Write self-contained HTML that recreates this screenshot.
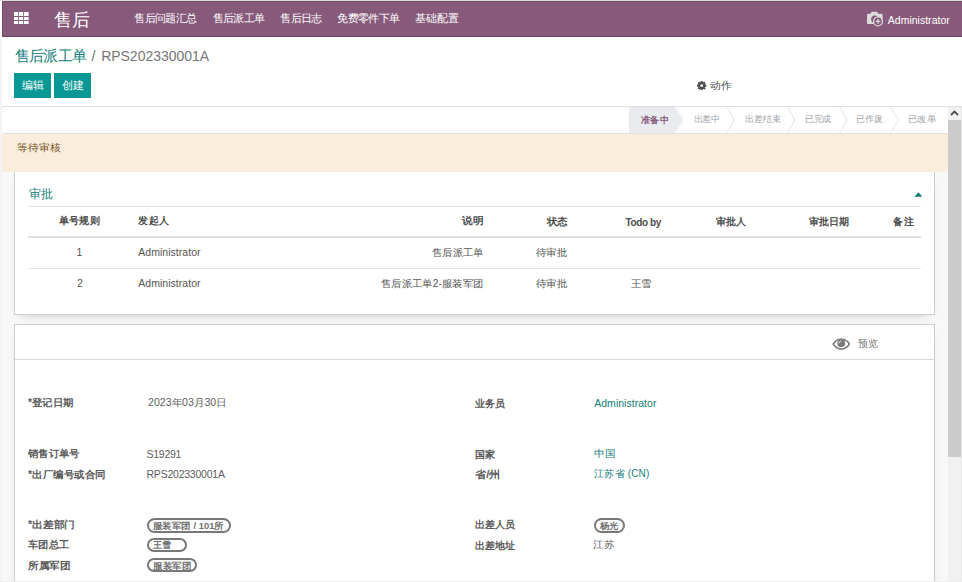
<!DOCTYPE html>
<html><head><meta charset="utf-8"><style>
html,body{margin:0;padding:0;}
body{width:962px;height:582px;overflow:hidden;position:relative;background:#fff;font-family:'Liberation Sans',sans-serif;}
.a{position:absolute;}
.t{position:absolute;line-height:1;white-space:pre;font-family:'Liberation Sans',sans-serif;}
</style></head><body>
<div class=a style="left:0;top:0;width:962px;height:1px;background:#dcdcdc"></div>
<div class=a style="left:2px;top:1px;width:960px;height:36px;background:#875A7B"></div>
<div class=a style="left:2px;top:1px;width:960px;height:1px;background:#7d5071"></div>
<div class=a style="left:2px;top:36px;width:960px;height:1px;background:#6f4464"></div>
<div class=a style="left:2px;top:1px;width:1px;height:36px;background:#74486a"></div>
<div class=a style="left:0;top:37px;width:2px;height:545px;background:#f4f4f4"></div>
<!-- grid icon -->
<svg class=a style="left:10px;top:8px" width="24" height="20" viewBox="0 0 24 20"><g fill="#fff"><rect x="4" y="4" width="4.2" height="4"/><rect x="4" y="9" width="4.2" height="3"/><rect x="4" y="13" width="4.2" height="3"/><rect x="9" y="4" width="4.2" height="4"/><rect x="9" y="9" width="4.2" height="3"/><rect x="9" y="13" width="4.2" height="3"/><rect x="14" y="4" width="4.6" height="4"/><rect x="14" y="9" width="4.6" height="3"/><rect x="14" y="13" width="4.6" height="3"/></g></svg>
<!-- camera avatar icon -->
<svg class=a style="left:862px;top:8px" width="26" height="22" viewBox="0 0 26 22">
<path d="M5.2 5.8 h3.4 l1 -2 h5.6 l1 2 h3.2 a1.2 1.2 0 0 1 1.2 1.2 v7.7 a1.2 1.2 0 0 1 -1.2 1.2 h-13.2 a1.2 1.2 0 0 1 -1.2 -1.2 v-7.7 a1.2 1.2 0 0 1 1.2 -1.2z" fill="#dcdcdc"/>
<circle cx="12.8" cy="11.2" r="3.6" fill="#875A7B"/>
<circle cx="16" cy="13.4" r="5" fill="#dcdcdc"/>
<circle cx="16" cy="13.4" r="3.8" fill="#875A7B"/>
<path d="M16 11 v4.8 M13.6 13.4 h4.8" stroke="#dcdcdc" stroke-width="1.3"/>
</svg>
<!-- control panel -->
<div class=a style="left:14px;top:73px;width:37px;height:25px;background:#0a9894"></div>
<div class=a style="left:54px;top:73px;width:37px;height:25px;background:#0a9894"></div>
<svg class=a style="left:697.3px;top:80.8px" width="9.4" height="9.4" viewBox="0 0 10 10">
<g fill="#505050"><circle cx="5" cy="5" r="3.7"/>
<rect x="3.8" y="0" width="2.4" height="10" rx="0.4"/><rect x="0" y="3.8" width="10" height="2.4" rx="0.4"/>
<rect x="3.8" y="0" width="2.4" height="10" rx="0.4" transform="rotate(45 5 5)"/><rect x="3.8" y="0" width="2.4" height="10" rx="0.4" transform="rotate(-45 5 5)"/></g>
<circle cx="5" cy="5" r="1.5" fill="#fff"/></svg>
<div class=a style="left:2px;top:106px;width:960px;height:1px;background:#dfe1e4"></div>
<!-- statusbar -->
<div class=a style="left:2px;top:133px;width:946px;height:1px;background:#dfe1e4"></div>
<svg class=a style="left:620px;top:107px" width="328" height="26" viewBox="0 0 328 26">
<path d="M9 0 H55 L63.5 13 L55 26 H9 Z" fill="#e9ebee"/>
<g fill="none" stroke="#dfe1e4" stroke-width="1">
<path d="M106.5 0 L114.5 13 L106.5 26"/><path d="M167.5 0 L175 13 L167.5 26"/><path d="M219.5 0 L227 13 L219.5 26"/><path d="M270.5 0 L278.5 13 L270.5 26"/>
</g></svg>
<!-- form bg -->
<div class=a style="left:2px;top:134px;width:946px;height:447px;background:#f8f8f8"></div>
<div class=a style="left:2px;top:134px;width:946px;height:38px;background:#fbeddc"></div>
<!-- card 1 -->
<div class=a style="left:14px;top:172px;width:919px;height:142px;background:#fff;border:1px solid #c9d0d8;border-top:none;box-shadow:0 5px 12px -8px rgba(0,0,0,.35)"></div>
<svg class=a style="left:913.5px;top:191.8px" width="9" height="5" viewBox="0 0 9 5"><path d="M0.4 4.7 L4.4 0.2 L8.4 4.7Z" fill="#137d7c"/></svg>
<div class=a style="left:28px;top:206px;width:893px;height:1px;background:#e3e6ea"></div>
<div class=a style="left:28px;top:236px;width:893px;height:2px;background:#dcdfe3"></div>
<div class=a style="left:28px;top:268px;width:893px;height:1px;background:#e3e6ea"></div>
<!-- card 2 -->
<div class=a style="left:14px;top:324px;width:919px;height:270px;background:#fff;border:1px solid #c9d0d8;box-shadow:0 5px 12px -8px rgba(0,0,0,.35)"></div>
<div class=a style="left:15px;top:359px;width:919px;height:1px;background:#d5dae0"></div>
<svg class=a style="left:832px;top:338px" width="19" height="12" viewBox="0 0 19 12">
<path d="M0.3 6 C3 1.6 6 0.4 9.3 0.4 C12.6 0.4 15.8 1.6 18.3 6 C15.8 10.4 12.6 11.8 9.3 11.8 C6 11.8 3 10.4 0.3 6Z" fill="#7a7a7a"/>
<path d="M2.1 6 C4.3 2.9 6.8 2 9.3 2 C11.8 2 14.3 2.9 16.5 6 C14.3 9.1 11.8 10.2 9.3 10.2 C6.8 10.2 4.3 9.1 2.1 6Z" fill="#fff"/>
<circle cx="9.2" cy="5.2" r="3.9" fill="#7a7a7a"/>
<path d="M6.9 5.4 A2.4 2.4 0 0 1 9.3 3" fill="none" stroke="#f4f4f4" stroke-width="0.9"/>
</svg>
<!-- badges -->
<div class=a style="left:147px;top:518px;width:80.3px;height:10.5px;border:2px solid #787878;border-radius:8px"></div>
<div class=a style="left:147px;top:538.2px;width:35.5px;height:10px;border:2px solid #787878;border-radius:8px"></div>
<div class=a style="left:147px;top:558.4px;width:45.5px;height:9.6px;border:2px solid #787878;border-radius:8px"></div>
<div class=a style="left:593.9px;top:518.3px;width:27px;height:10.3px;border:2px solid #787878;border-radius:8px"></div>
<!-- scrollbar -->
<div class=a style="left:948px;top:107px;width:13px;height:474px;background:#f1f1f1"></div>
<div class=a style="left:948px;top:120px;width:13px;height:337px;background:#cbcbcb"></div>
<svg class=a style="left:948px;top:107px" width="13" height="13" viewBox="0 0 13 13"><path d="M3 8 L6.5 4.5 L10 8" fill="none" stroke="#505050" stroke-width="1.8"/></svg>
<div class=a style="left:961px;top:107px;width:1px;height:475px;background:#e6e6e6"></div>
<div class=a style="left:0;top:581px;width:962px;height:1px;background:#eeeeee"></div>
<span class=t style="left:54.00px;top:11.00px;font-size:18px;font-weight:normal;color:#fff;letter-spacing:0.000px;">售后</span>
<span class=t style="left:134.30px;top:13.40px;font-size:11px;font-weight:normal;color:#fff;letter-spacing:-0.640px;">售后问题汇总</span>
<span class=t style="left:212.60px;top:13.40px;font-size:11px;font-weight:normal;color:#fff;letter-spacing:-0.650px;">售后派工单</span>
<span class=t style="left:280.30px;top:13.40px;font-size:11px;font-weight:normal;color:#fff;letter-spacing:-0.767px;">售后日志</span>
<span class=t style="left:337.40px;top:13.40px;font-size:11px;font-weight:normal;color:#fff;letter-spacing:-0.680px;">免费零件下单</span>
<span class=t style="left:415.00px;top:13.40px;font-size:11px;font-weight:normal;color:#fff;letter-spacing:-0.067px;">基础配置</span>
<span class=t style="left:887.80px;top:14.70px;font-size:10.5px;font-weight:normal;color:#fff;letter-spacing:0.008px;">Administrator</span>
<span class=t style="left:14.90px;top:48.10px;font-size:15px;font-weight:normal;color:#137d7c;letter-spacing:-0.775px;">售后派工单</span>
<span class=t style="left:91.50px;top:49.00px;font-size:14.5px;font-weight:normal;color:#777;letter-spacing:0.000px;">/</span>
<span class=t style="left:101.20px;top:49.00px;font-size:14px;font-weight:normal;color:#777;letter-spacing:-0.033px;">RPS202330001A</span>
<span class=t style="left:22.35px;top:79.80px;font-size:11px;font-weight:normal;color:#fff;letter-spacing:-0.650px;">编辑</span>
<span class=t style="left:61.80px;top:79.80px;font-size:11px;font-weight:normal;color:#fff;letter-spacing:0.000px;">创建</span>
<span class=t style="left:709.80px;top:80.50px;font-size:10px;font-weight:normal;color:#4c4c4c;letter-spacing:0.000px;transform:scaleX(1.0737);transform-origin:0 0">动作</span>
<span class=t style="left:641.00px;top:116.30px;font-size:9px;font-weight:bold;color:#875A7B;letter-spacing:0.250px;">准备中</span>
<span class=t style="left:693.50px;top:115.30px;font-size:9px;font-weight:normal;color:#9ea3a9;letter-spacing:-0.350px;">出差中</span>
<span class=t style="left:745.00px;top:115.30px;font-size:9px;font-weight:normal;color:#9ea3a9;letter-spacing:0.000px;">出差结束</span>
<span class=t style="left:804.60px;top:115.30px;font-size:9px;font-weight:normal;color:#9ea3a9;letter-spacing:-0.050px;">已完成</span>
<span class=t style="left:856.30px;top:115.30px;font-size:9px;font-weight:normal;color:#9ea3a9;letter-spacing:-0.150px;">已作废</span>
<span class=t style="left:907.70px;top:115.30px;font-size:9px;font-weight:normal;color:#9ea3a9;letter-spacing:0.000px;transform:scaleX(1.0520);transform-origin:0 0">已改单</span>
<span class=t style="left:17.40px;top:143.20px;font-size:10px;font-weight:normal;color:#6e5020;letter-spacing:0.000px;transform:scaleX(1.0842);transform-origin:0 0">等待审核</span>
<span class=t style="left:28.60px;top:188.00px;font-size:12px;font-weight:normal;color:#137d7c;letter-spacing:0.300px;">审批</span>
<span class=t style="left:58.70px;top:216.40px;font-size:10px;font-weight:bold;color:#4c4c4c;letter-spacing:0.333px;">单号规则</span>
<span class=t style="left:138.30px;top:216.40px;font-size:10px;font-weight:bold;color:#4c4c4c;letter-spacing:0.300px;">发起人</span>
<span class=t style="left:462.30px;top:216.40px;font-size:10px;font-weight:bold;color:#4c4c4c;letter-spacing:0.000px;transform:scaleX(1.0632);transform-origin:0 0">说明</span>
<span class=t style="left:546.50px;top:217.40px;font-size:10px;font-weight:bold;color:#4c4c4c;letter-spacing:0.000px;transform:scaleX(1.0450);transform-origin:0 0">状态</span>
<span class=t style="left:715.60px;top:217.40px;font-size:10px;font-weight:bold;color:#4c4c4c;letter-spacing:0.000px;">审批人</span>
<span class=t style="left:808.60px;top:217.40px;font-size:10px;font-weight:bold;color:#4c4c4c;letter-spacing:0.200px;">审批日期</span>
<span class=t style="left:893.40px;top:217.40px;font-size:10px;font-weight:bold;color:#4c4c4c;letter-spacing:0.500px;">备注</span>
<span class=t style="left:625.50px;top:217.60px;font-size:10px;font-weight:bold;color:#4c4c4c;letter-spacing:-0.383px;">Todo by</span>
<span class=t style="left:76.40px;top:247.00px;font-size:10.5px;font-weight:normal;color:#555;letter-spacing:0.000px;">1</span>
<span class=t style="left:138.30px;top:247.00px;font-size:10.5px;font-weight:normal;color:#555;letter-spacing:0.033px;">Administrator</span>
<span class=t style="left:431.70px;top:247.80px;font-size:10px;font-weight:normal;color:#555;letter-spacing:0.000px;transform:scaleX(1.0367);transform-origin:0 0">售后派工单</span>
<span class=t style="left:536.20px;top:247.80px;font-size:10px;font-weight:normal;color:#555;letter-spacing:0.000px;transform:scaleX(1.0400);transform-origin:0 0">待审批</span>
<span class=t style="left:77.00px;top:278.40px;font-size:10.5px;font-weight:normal;color:#555;letter-spacing:0.000px;">2</span>
<span class=t style="left:138.30px;top:278.40px;font-size:10.5px;font-weight:normal;color:#555;letter-spacing:0.033px;">Administrator</span>
<span class=t style="left:381.20px;top:279.00px;font-size:10px;font-weight:normal;color:#555;letter-spacing:0.000px;transform:scaleX(1.0337);transform-origin:0 0">售后派工单2-服装军团</span>
<span class=t style="left:536.20px;top:279.00px;font-size:10px;font-weight:normal;color:#555;letter-spacing:0.000px;transform:scaleX(1.0400);transform-origin:0 0">待审批</span>
<span class=t style="left:630.70px;top:279.00px;font-size:10px;font-weight:normal;color:#555;letter-spacing:0.000px;transform:scaleX(1.0400);transform-origin:0 0">王雪</span>
<span class=t style="left:858.00px;top:338.60px;font-size:10px;font-weight:normal;color:#777;letter-spacing:0.000px;">预览</span>
<span class=t style="left:27.70px;top:398.00px;font-size:10px;font-weight:bold;color:#5a5a5a;letter-spacing:0.000px;transform:scaleX(1.0386);transform-origin:0 0">*登记日期</span>
<span class=t style="left:147.50px;top:398.30px;font-size:10px;font-weight:normal;color:#606060;letter-spacing:0.000px;transform:scaleX(1.0569);transform-origin:0 0">2023年03月30日</span>
<span class=t style="left:27.70px;top:449.40px;font-size:10px;font-weight:bold;color:#5a5a5a;letter-spacing:0.000px;transform:scaleX(1.0340);transform-origin:0 0">销售订单号</span>
<span class=t style="left:146.50px;top:449.30px;font-size:10.5px;font-weight:normal;color:#606060;letter-spacing:-0.260px;">S19291</span>
<span class=t style="left:27.70px;top:469.60px;font-size:10px;font-weight:bold;color:#5a5a5a;letter-spacing:0.000px;transform:scaleX(1.0493);transform-origin:0 0">*出厂编号或合同</span>
<span class=t style="left:146.50px;top:468.60px;font-size:10.5px;font-weight:normal;color:#606060;letter-spacing:-0.225px;">RPS202330001A</span>
<span class=t style="left:27.70px;top:520.00px;font-size:10px;font-weight:bold;color:#5a5a5a;letter-spacing:0.000px;transform:scaleX(1.0744);transform-origin:0 0">*出差部门</span>
<span class=t style="left:27.70px;top:540.00px;font-size:10px;font-weight:bold;color:#5a5a5a;letter-spacing:0.000px;transform:scaleX(1.0325);transform-origin:0 0">车团总工</span>
<span class=t style="left:27.70px;top:560.50px;font-size:10px;font-weight:bold;color:#5a5a5a;letter-spacing:0.000px;transform:scaleX(1.0590);transform-origin:0 0">所属军团</span>
<span class=t style="left:474.50px;top:399.00px;font-size:10px;font-weight:bold;color:#5a5a5a;letter-spacing:0.200px;">业务员</span>
<span class=t style="left:594.20px;top:397.70px;font-size:10.5px;font-weight:normal;color:#137d7c;letter-spacing:0.033px;">Administrator</span>
<span class=t style="left:474.50px;top:450.40px;font-size:10px;font-weight:bold;color:#5a5a5a;letter-spacing:0.500px;">国家</span>
<span class=t style="left:594.20px;top:449.40px;font-size:10px;font-weight:normal;color:#137d7c;letter-spacing:0.000px;transform:scaleX(1.0526);transform-origin:0 0">中国</span>
<span class=t style="left:474.50px;top:469.60px;font-size:10px;font-weight:bold;color:#5a5a5a;letter-spacing:0.000px;transform:scaleX(1.1136);transform-origin:0 0">省/州</span>
<span class=t style="left:594.20px;top:468.60px;font-size:10px;font-weight:normal;color:#137d7c;letter-spacing:0.171px;">江苏省 (CN)</span>
<span class=t style="left:474.50px;top:520.00px;font-size:10px;font-weight:bold;color:#5a5a5a;letter-spacing:0.300px;">出差人员</span>
<span class=t style="left:474.50px;top:541.00px;font-size:10px;font-weight:bold;color:#5a5a5a;letter-spacing:0.300px;">出差地址</span>
<span class=t style="left:593.20px;top:540.00px;font-size:10px;font-weight:normal;color:#606060;letter-spacing:0.000px;transform:scaleX(1.0789);transform-origin:0 0">江苏</span>
<span class=t style="left:153.40px;top:522.30px;font-size:9px;font-weight:bold;color:#707070;letter-spacing:0.000px;transform:scaleX(1.0500);transform-origin:0 0">服装军团 / 101所</span>
<span class=t style="left:153.40px;top:541.00px;font-size:9px;font-weight:bold;color:#707070;letter-spacing:-0.200px;">王雪</span>
<span class=t style="left:153.40px;top:562.20px;font-size:9px;font-weight:bold;color:#707070;letter-spacing:0.000px;transform:scaleX(1.0600);transform-origin:0 0">服装军团</span>
<span class=t style="left:599.70px;top:522.10px;font-size:9px;font-weight:bold;color:#707070;letter-spacing:0.000px;transform:scaleX(1.0389);transform-origin:0 0">杨光</span>
</body></html>
